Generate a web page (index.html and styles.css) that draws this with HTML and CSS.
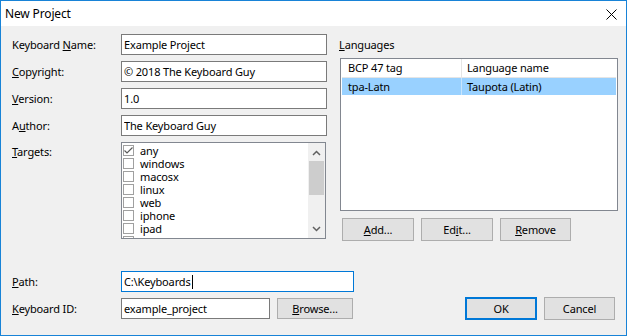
FILE: index.html
```html
<!DOCTYPE html>
<html lang="en">
<head>
    <meta charset="UTF-8">
    <title>New Project</title>
    <link rel="stylesheet" href="styles.css">
</head>
<body>
    <div class="window">
        <div class="titlebar">
            <span class="title">New Project</span>
            <svg class="close" width="11" height="11" viewBox="0 0 11 11">
                <path d="M0.5 0.5 L10.5 10.5 M10.5 0.5 L0.5 10.5" stroke="#000" stroke-width="1" fill="none"/>
            </svg>
        </div>

        <div class="client">
            <div class="top">
                <!-- Project details -->
                <div class="fields">
                    <label>Keyboard <u>N</u>ame:</label>
                    <input type="text" value="Example Project">

                    <label><u>C</u>opyright:</label>
                    <input type="text" value="© 2018 The Keyboard Guy">

                    <label><u>V</u>ersion:</label>
                    <input type="text" value="1.0">

                    <label>A<u>u</u>thor:</label>
                    <input type="text" value="The Keyboard Guy">

                    <label class="label-top"><u>T</u>argets:</label>
                    <div class="checklist">
                        <div class="items">
                            <div class="item"><span class="box checked"><svg width="11" height="11" viewBox="0 0 11 11"><path d="M1.5 5.5 L4 8 L9.5 2.5" stroke="#5a5a5a" stroke-width="1.2" fill="none"/></svg></span>any</div>
                            <div class="item"><span class="box"></span>windows</div>
                            <div class="item"><span class="box"></span>macosx</div>
                            <div class="item"><span class="box"></span>linux</div>
                            <div class="item"><span class="box"></span>web</div>
                            <div class="item"><span class="box"></span>iphone</div>
                            <div class="item"><span class="box"></span>ipad</div>
                            <div class="item"><span class="box"></span></div>
                        </div>
                        <div class="scrollbar">
                            <svg class="arrow" width="9" height="6" viewBox="0 0 9 6"><path d="M1 5 L4.5 1.5 L8 5" stroke="#606060" stroke-width="1.5" fill="none"/></svg>
                            <div class="thumb"></div>
                            <svg class="arrow down" width="9" height="6" viewBox="0 0 9 6"><path d="M1 1 L4.5 4.5 L8 1" stroke="#606060" stroke-width="1.5" fill="none"/></svg>
                        </div>
                    </div>
                </div>

                <!-- Languages -->
                <div class="languages">
                    <div class="lang-label"><u>L</u>anguages</div>
                    <div class="listview">
                        <div class="lv-row lv-header">
                            <div class="col-tag">BCP 47 tag</div>
                            <div class="col-name">Language name</div>
                        </div>
                        <div class="lv-row selected">
                            <div class="col-tag">tpa-Latn</div>
                            <div class="col-name">Taupota (Latin)</div>
                        </div>
                    </div>
                    <div class="lang-buttons">
                        <button class="btn w72"><u>A</u>dd...</button>
                        <button class="btn w72">Ed<u>i</u>t...</button>
                        <button class="btn w71"><u>R</u>emove</button>
                    </div>
                </div>
            </div>

            <div class="bottom">
                <div class="paths">
                    <label><u>P</u>ath:</label>
                    <div class="path-input">C:\Keyboards<span class="caret"></span></div>

                    <label><u>K</u>eyboard ID:</label>
                    <div class="id-row">
                        <input type="text" class="id-input" value="example_project">
                        <button class="btn browse"><u>B</u>rowse...</button>
                    </div>
                </div>
                <div class="dialog-buttons">
                    <button class="btn w72 default">OK</button>
                    <button class="btn w71">Cancel</button>
                </div>
            </div>
        </div>
    </div>
</body>
</html>
```

FILE: styles.css
```css
body {
    margin: 0;
    font-family: "Noto Sans", sans-serif;
    font-size: 11px;
    letter-spacing: -0.15px;
    color: #000;
}

.window {
    width: 627px;
    height: 336px;
    box-sizing: border-box;
    border: 1px solid #1883d7;
    background-color: #f0f0f0;
    display: flex;
    flex-direction: column;
}

.titlebar {
    height: 25px;
    background-color: #fff;
    display: flex;
    align-items: center;
    justify-content: space-between;
    padding: 0 9px 0 4px;
    font-size: 12px;
}

.close {
    margin-top: 2px;
}

.client {
    padding: 8px 8px 0 11px;
}

.top {
    display: flex;
    gap: 12px;
}

.fields {
    width: 315px;
    display: grid;
    grid-template-columns: 109px 206px;
    grid-template-rows: 21px 21px 21px 21px 97px;
    row-gap: 6px;
}

label {
    align-self: center;
}

.label-top {
    align-self: start;
    padding-top: 2px;
}

input {
    box-sizing: border-box;
    height: 21px;
    border: 1px solid #7a7a7a;
    background-color: #fff;
    padding: 0 2px;
    margin: 0;
    font-family: inherit;
    font-size: 11px;
    letter-spacing: -0.15px;
    color: #000;
    outline: none;
}

/* Targets checklist */
.checklist {
    width: 205px;
    box-sizing: border-box;
    border: 1px solid #828790;
    background-color: #fff;
    display: flex;
    overflow: hidden;
}

.items {
    flex: 1;
    padding-top: 1px;
    overflow: hidden;
}

.item {
    height: 13px;
    line-height: 13px;
    display: flex;
    align-items: center;
    white-space: nowrap;
}

.box {
    width: 11px;
    height: 11px;
    box-sizing: border-box;
    border: 1px solid #a0a0a0;
    margin: 0 6px 0 1px;
    display: flex;
    flex: none;
}

.box.checked svg {
    margin: -1px;
}

.scrollbar {
    width: 17px;
    background-color: #f0f0f0;
    display: flex;
    flex-direction: column;
    align-items: center;
}

.arrow {
    margin-top: 7px;
}

.arrow.down {
    margin-top: auto;
    margin-bottom: 6px;
}

.thumb {
    width: 15px;
    height: 34px;
    margin-top: 5px;
    background-color: #cdcdcd;
}

/* Languages */
.languages {
    width: 279px;
}

.lang-label {
    height: 21px;
    line-height: 21px;
    margin-bottom: 3px;
}

.listview {
    margin-left: 1px;
    height: 153px;
    box-sizing: border-box;
    border: 1px solid #828790;
    background-color: #fff;
    padding: 0 1px;
}

.lv-row {
    display: flex;
    height: 17px;
    line-height: 17px;
}

.lv-header {
    height: 18px;
    line-height: 18px;
    border-bottom: 1px solid #e5e5e5;
}

.col-tag {
    width: 113px;
    padding-left: 6px;
    border-right: 1px solid #e5e5e5;
}

.col-name {
    flex: 1;
    padding-left: 5px;
}

.selected {
    background-color: #99d1ff;
}

.selected .col-tag {
    border-right-color: #c8e5fd;
}

.lang-buttons {
    display: flex;
    gap: 7px;
    margin: 7px 0 0 3px;
}

.btn {
    box-sizing: border-box;
    height: 23px;
    border: 1px solid #adadad;
    background-color: #e1e1e1;
    font-family: inherit;
    font-size: 11px;
    letter-spacing: -0.15px;
    color: #000;
    padding: 0;
    margin: 0;
}

.w72 {
    width: 72px;
}

.w71 {
    width: 71px;
}

/* Path and ID */
.bottom {
    display: flex;
    align-items: flex-end;
    margin-top: 30px;
}

.paths {
    display: grid;
    grid-template-columns: 109px auto;
    grid-template-rows: 21px 21px;
    row-gap: 6px;
}

.path-input {
    width: 233px;
    height: 21px;
    box-sizing: border-box;
    border: 1px solid #0078d7;
    background-color: #fff;
    padding: 0 2px;
    line-height: 19px;
    display: flex;
    align-items: center;
}

.caret {
    width: 1px;
    height: 14px;
    background-color: #000;
    margin-left: 1px;
}

.id-row {
    display: flex;
    align-items: center;
    gap: 7px;
}

.id-input {
    width: 149px;
}

.browse {
    width: 76px;
    height: 21px;
}

.dialog-buttons {
    margin-left: auto;
    margin-right: 3px;
    margin-bottom: -1px;
    display: flex;
    gap: 7px;
}

.default {
    border: 2px solid #0078d7;
}
```
